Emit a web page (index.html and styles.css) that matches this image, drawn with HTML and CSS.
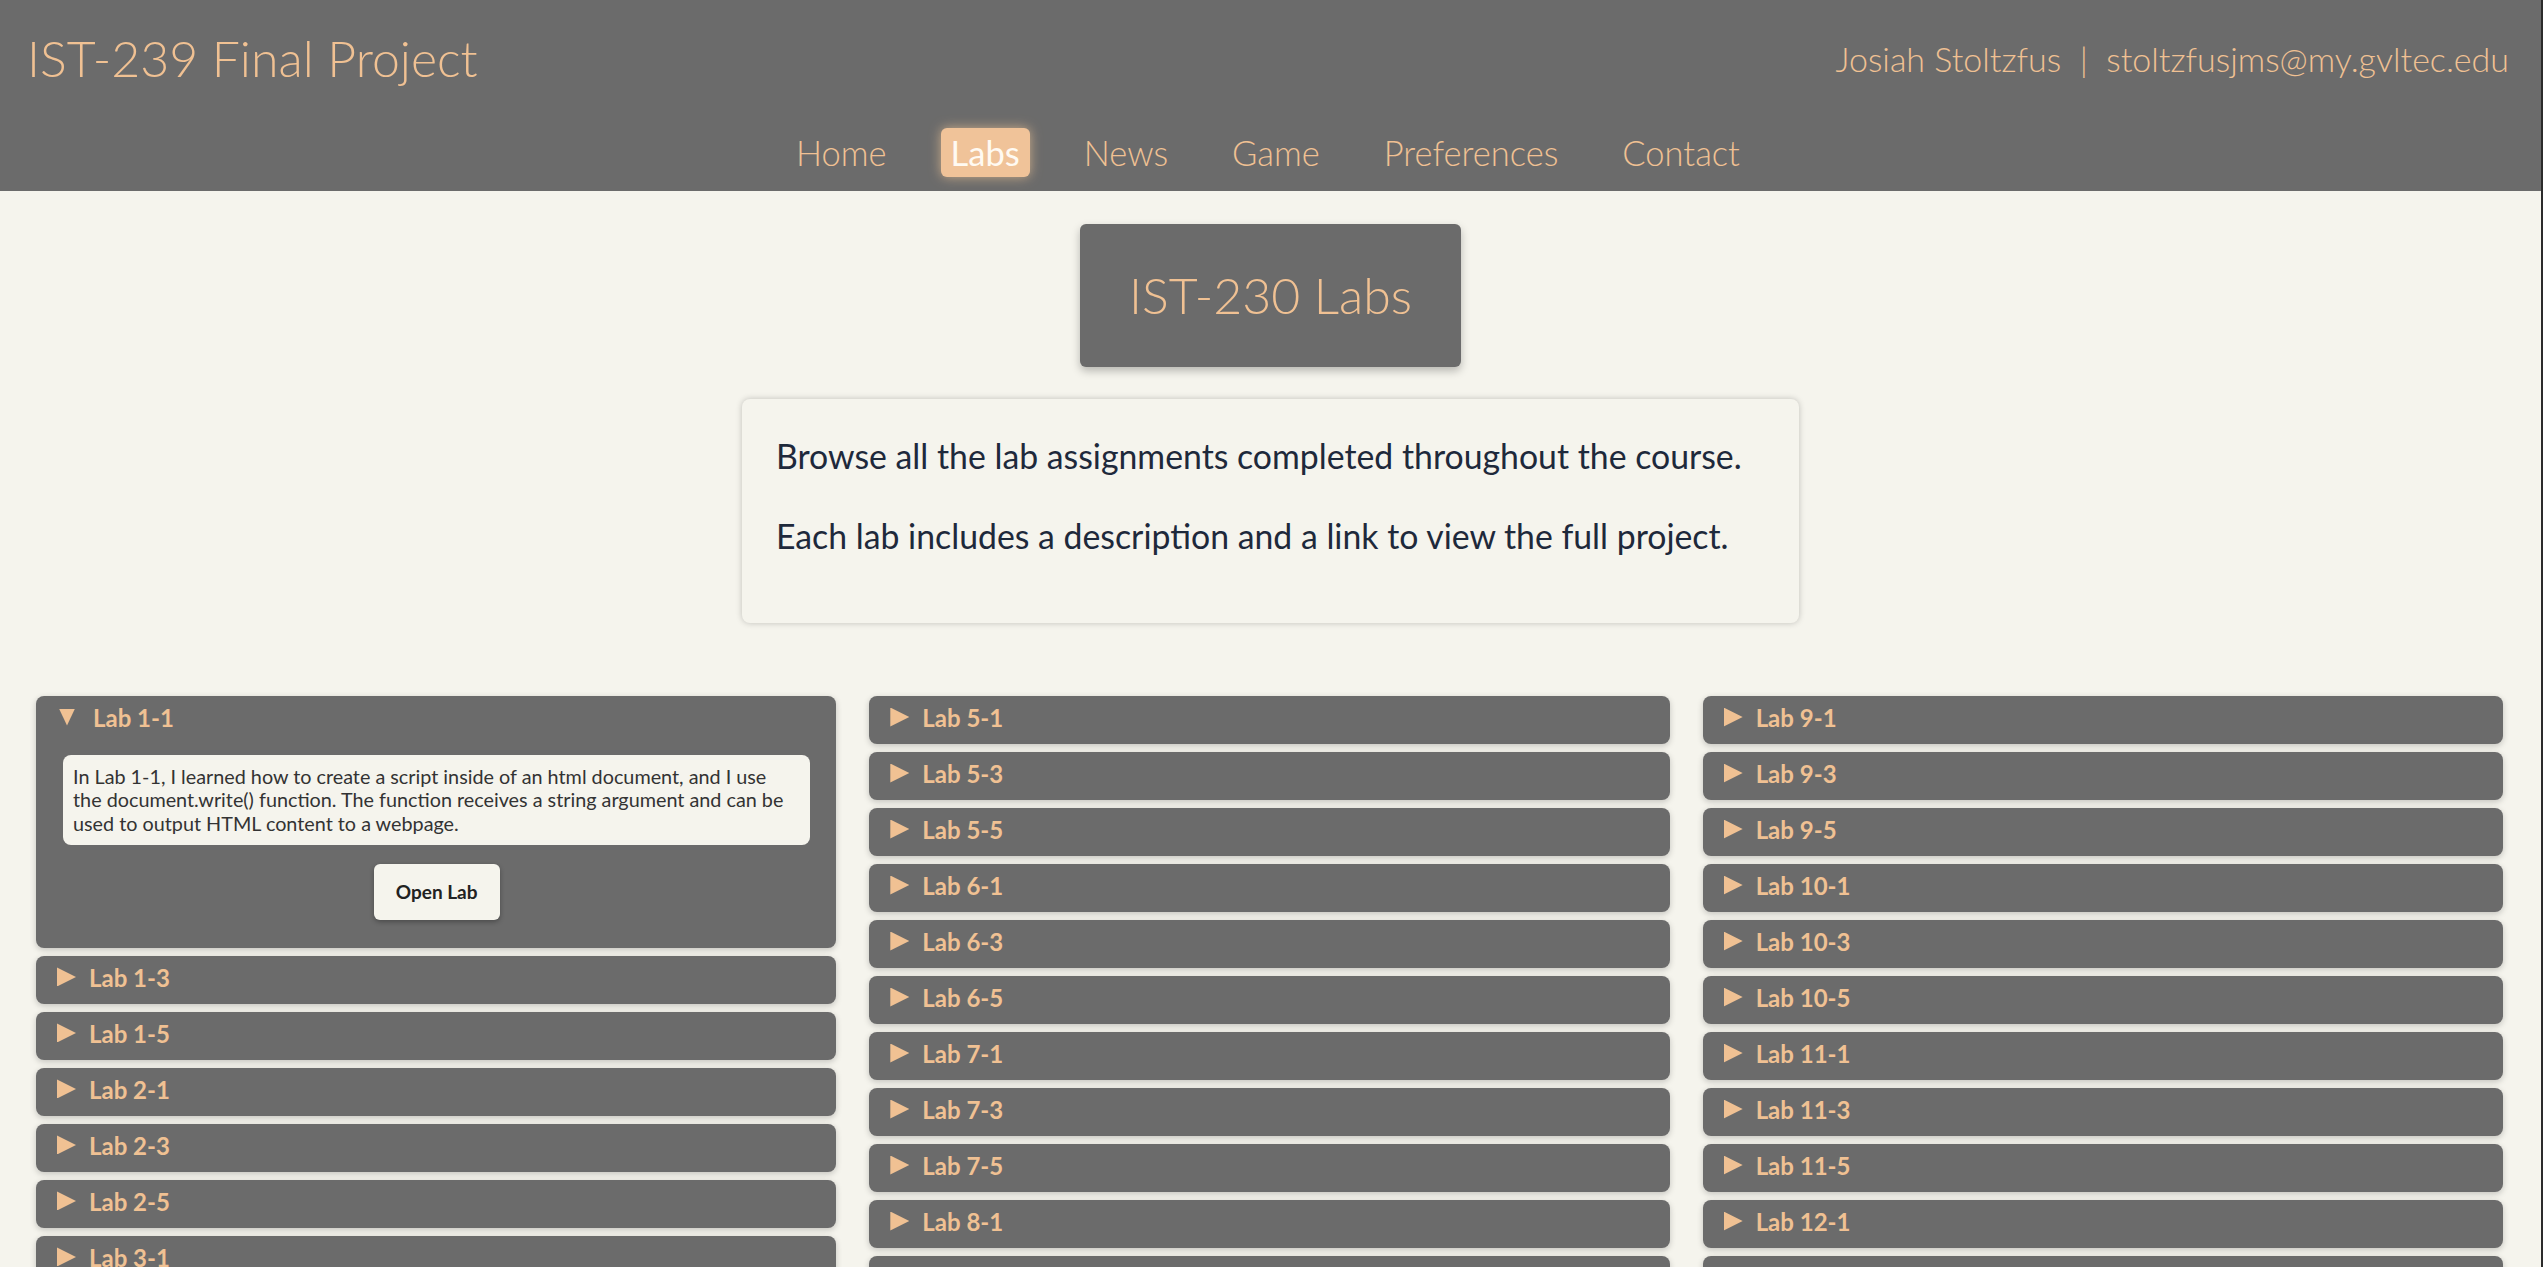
FILE: index.html
```html
<!DOCTYPE html>
<html lang="en">
<head>
<meta charset="utf-8">
<title>IST-230 Labs</title>
<link rel="stylesheet" href="styles.css">
</head>
<body>
<header class="site-header">
  <div class="header-top">
    <h1 class="site-title">IST-239 Final Project</h1>
    <div class="site-contact">Josiah Stoltzfus &nbsp;|&nbsp; stoltzfusjms@my.gvltec.edu</div>
  </div>
  <nav class="main-nav">
    <a href="#" class="nav-link">Home</a>
    <a href="#" class="nav-link active">Labs</a>
    <a href="#" class="nav-link">News</a>
    <a href="#" class="nav-link">Game</a>
    <a href="#" class="nav-link">Preferences</a>
    <a href="#" class="nav-link">Contact</a>
  </nav>
</header>

<main class="page">
  <h2 class="page-title">IST-230 Labs</h2>
  <section class="intro">
    <p>Browse all the lab assignments completed throughout the course.</p>
    <p>Each lab includes a description and a link to view the full project.</p>
  </section>

  <section class="lab-grid">
    <div class="lab-col">
      <details class="lab" open>
        <summary>Lab 1-1</summary>
        <div class="lab-body">
          <p class="lab-desc">In Lab 1-1, I learned how to create a script inside of an html document, and I use the document.write() function. The function receives a string argument and can be used to output HTML content to a webpage.</p>
          <a href="#" class="lab-btn">Open Lab</a>
        </div>
      </details>
      <details class="lab"><summary>Lab 1-3</summary></details>
      <details class="lab"><summary>Lab 1-5</summary></details>
      <details class="lab"><summary>Lab 2-1</summary></details>
      <details class="lab"><summary>Lab 2-3</summary></details>
      <details class="lab"><summary>Lab 2-5</summary></details>
      <details class="lab"><summary>Lab 3-1</summary></details>
      <details class="lab"><summary>Lab 3-3</summary></details>
      <details class="lab"><summary>Lab 3-5</summary></details>
      <details class="lab"><summary>Lab 4-1</summary></details>
      <details class="lab"><summary>Lab 4-3</summary></details>
      <details class="lab"><summary>Lab 4-5</summary></details>
    </div>
    <div class="lab-col">
      <details class="lab"><summary>Lab 5-1</summary></details>
      <details class="lab"><summary>Lab 5-3</summary></details>
      <details class="lab"><summary>Lab 5-5</summary></details>
      <details class="lab"><summary>Lab 6-1</summary></details>
      <details class="lab"><summary>Lab 6-3</summary></details>
      <details class="lab"><summary>Lab 6-5</summary></details>
      <details class="lab"><summary>Lab 7-1</summary></details>
      <details class="lab"><summary>Lab 7-3</summary></details>
      <details class="lab"><summary>Lab 7-5</summary></details>
      <details class="lab"><summary>Lab 8-1</summary></details>
      <details class="lab"><summary>Lab 8-3</summary></details>
      <details class="lab"><summary>Lab 8-5</summary></details>
    </div>
    <div class="lab-col">
      <details class="lab"><summary>Lab 9-1</summary></details>
      <details class="lab"><summary>Lab 9-3</summary></details>
      <details class="lab"><summary>Lab 9-5</summary></details>
      <details class="lab"><summary>Lab 10-1</summary></details>
      <details class="lab"><summary>Lab 10-3</summary></details>
      <details class="lab"><summary>Lab 10-5</summary></details>
      <details class="lab"><summary>Lab 11-1</summary></details>
      <details class="lab"><summary>Lab 11-3</summary></details>
      <details class="lab"><summary>Lab 11-5</summary></details>
      <details class="lab"><summary>Lab 12-1</summary></details>
      <details class="lab"><summary>Lab 12-3</summary></details>
      <details class="lab"><summary>Lab 12-5</summary></details>
    </div>
  </section>
</main>
</body>
</html>
```

FILE: styles.css
```css
* { box-sizing: border-box; }

html { background: #f5f4ed; }

body {
  margin: 0;
  font-family: "Lato", "Open Sans", sans-serif;
  background: #f5f4ed;
  color: #1e293b;
  border-right: 2px solid #2b2b2b;
}

.site-header {
  background: #6b6b6b;
  padding: 24px 32px 14px 27px;
  color: #f0c193;
}

.header-top {
  display: flex;
  justify-content: space-between;
  align-items: center;
  height: 68px;
}

.site-title {
  margin: 0;
  font-size: 50px;
  font-weight: 300;
  line-height: 68px;
  color: #f0c193;
}

.site-contact {
  font-size: 34px;
  font-weight: 300;
  color: #f0c193;
}

.main-nav {
  display: flex;
  justify-content: center;
  gap: 44px;
  margin-top: 36px;
}

.nav-link {
  display: block;
  padding: 4px 10px;
  line-height: 41px;
  font-size: 34.5px;
  font-weight: 300;
  color: #f0c193;
  text-decoration: none;
  border-radius: 6px;
}

.nav-link.active {
  background: #f0c399;
  color: #fffaf2;
  font-weight: 400;
  box-shadow: 0 0 12px rgba(244, 200, 150, 0.7);
}

.page {
  display: flex;
  flex-direction: column;
  align-items: center;
  padding-top: 33px;
}

.page-title {
  margin: 0;
  background: #6b6b6b;
  color: #f0c193;
  font-size: 50px;
  font-weight: 300;
  line-height: 63px;
  padding: 40px 49px;
  border-radius: 6px;
  box-shadow: 0 4px 8px rgba(0, 0, 0, 0.25);
}

.intro {
  margin-top: 32px;
  width: 1057px;
  padding: 33px 34px 31px;
  border-radius: 8px;
  background: #f5f4ed;
  box-shadow: 0 0 6px rgba(0, 0, 0, 0.22);
}

.intro p {
  margin: 0 0 32px;
  font-size: 33.8px;
  line-height: 48px;
  white-space: nowrap;
  color: #1e293b;
}

.lab-grid {
  align-self: stretch;
  display: grid;
  grid-template-columns: repeat(3, 1fr);
  column-gap: 33px;
  padding: 0 38px 0 36px;
  margin-top: 73px;
  align-items: start;
}

.lab-col {
  display: flex;
  flex-direction: column;
  gap: 8px;
}

.lab {
  background: #6b6b6b;
  border-radius: 8px;
  box-shadow: 0 2px 6px rgba(0, 0, 0, 0.2);
}

.lab summary {
  list-style: none;
  display: flex;
  align-items: center;
  height: 48px;
  padding: 0 21px 5px;
  font-size: 24px;
  font-weight: 700;
  color: #f0c193;
  cursor: pointer;
}

.lab summary::-webkit-details-marker { display: none; }

.lab summary::before {
  content: "";
  flex: none;
  width: 19px;
  height: 19px;
  margin: -1px 13px 0 0;
  background: #f0c193;
  clip-path: polygon(0 0, 100% 50%, 0 100%);
}

.lab[open] summary::before {
  width: 16px;
  height: 17px;
  margin: -1px 18px 0 2px;
  clip-path: polygon(0 0, 100% 0, 50% 100%);
}

.lab-body {
  display: flex;
  flex-direction: column;
  align-items: center;
  padding: 11px 26px 28px 27px;
}

.lab-desc {
  align-self: stretch;
  margin: 0 0 19px;
  padding: 10px 20px 10px 10px;
  background: #f5f4ed;
  border-radius: 8px;
  font-size: 19.8px;
  line-height: 23.3px;
  color: #333;
}

.lab-btn {
  display: block;
  width: 126px;
  height: 56px;
  line-height: 56px;
  text-align: center;
  background: #f5f4ed;
  border-radius: 6px;
  box-shadow: 0 2px 5px rgba(0, 0, 0, 0.3);
  font-size: 19px;
  font-weight: 700;
  color: #222;
  text-decoration: none;
}
```
